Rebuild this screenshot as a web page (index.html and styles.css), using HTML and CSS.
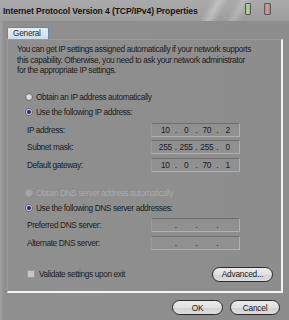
FILE: index.html
```
<!DOCTYPE html>
<html>
<head>
<meta charset="utf-8">
<link rel="stylesheet" href="styles.css">
</head>
<body>
<div class="win">
  <div class="titlebar">
    <span class="title">Internet Protocol Version 4 (TCP/IPv4) Properties</span>
    <span class="cap cap-green"></span>
    <span class="cap cap-red"></span>
  </div>
  <div class="client">
    <div class="tabs"><span class="tab">General</span></div>
    <div class="panel">
      <p class="intro">You can get IP settings assigned automatically if your network supports<br>this capability. Otherwise, you need to ask your network administrator<br>for the appropriate IP settings.</p>
      <div class="opt opt-first"><span class="radio"></span><span>Obtain an IP address automatically</span></div>
      <div class="opt"><span class="radio on"></span><span>Use the following IP address:</span></div>
      <div class="field-row fr-1"><span class="lbl">IP address:</span><span class="ip"><i>10</i><b>.</b><i>0</i><b>.</b><i>70</i><b>.</b><i>2</i></span></div>
      <div class="field-row"><span class="lbl">Subnet mask:</span><span class="ip"><i>255</i><b>.</b><i>255</i><b>.</b><i>255</i><b>.</b><i>0</i></span></div>
      <div class="field-row"><span class="lbl">Default gateway:</span><span class="ip"><i>10</i><b>.</b><i>0</i><b>.</b><i>70</i><b>.</b><i>1</i></span></div>
      <div class="opt opt-dns disabled"><span class="radio dim"></span><span>Obtain DNS server address automatically</span></div>
      <div class="opt"><span class="radio on"></span><span>Use the following DNS server addresses:</span></div>
      <div class="field-row fr-dns"><span class="lbl">Preferred DNS server:</span><span class="ip"><i></i><b>.</b><i></i><b>.</b><i></i><b>.</b><i></i></span></div>
      <div class="field-row"><span class="lbl">Alternate DNS server:</span><span class="ip"><i></i><b>.</b><i></i><b>.</b><i></i><b>.</b><i></i></span></div>
      <div class="validate-row">
        <span class="chk"></span><span class="vtext">Validate settings upon exit</span>
        <span class="btn btn-adv">Advanced...</span>
      </div>
    </div>
    <div class="buttons">
      <span class="btn btn-ok">OK</span>
      <span class="btn btn-cancel">Cancel</span>
    </div>
  </div>
</div>
</body>
</html>
```
FILE: styles.css
```
html, body {
  margin: 0;
  padding: 0;
}
body {
  width: 289px;
  height: 320px;
  overflow: hidden;
  background: #8d8d8d;
  font-family: "Liberation Sans", Arial, sans-serif;
  font-size: 8.3px;
  letter-spacing: -0.38px;
  color: #1c1c1c;
}
.win {
  width: 289px;
  height: 320px;
  display: flex;
  flex-direction: column;
  background: linear-gradient(90deg, #a2a2a2 0, #8f8f8f 4px, #8d8d8d 100%);
}
.titlebar {
  height: 21px;
  display: flex;
  align-items: center;
  padding-left: 3px;
  background:
    linear-gradient(120deg, transparent 0 70%, rgba(255,255,255,0.3) 73%, transparent 76%, transparent 79%, rgba(255,255,255,0.2) 81%, transparent 84%),
    linear-gradient(180deg, #aaaaaa 0%, #a3a3a3 60%, #9c9c9c 100%);
}
.title {
  font-weight: bold;
  font-size: 8.6px;
  color: #151515;
  letter-spacing: -0.1px;
  margin-top: 1px;
}
.cap {
  height: 12px;
  box-sizing: border-box;
  border-radius: 1px;
  border: 1px solid #5a5a5a;
  margin-top: 3px;
  align-self: flex-start;
}
.cap-green {
  width: 6px;
  margin-left: auto;
  background: linear-gradient(90deg, #9dbb8a, #b8d4a3, #93b07d);
}
.cap-red {
  width: 7px;
  margin-left: 13px;
  margin-right: 18px;
  background: linear-gradient(90deg, #b78585, #cfa0a0, #aa7676);
}
.client {
  flex: 1;
  display: flex;
  flex-direction: column;
  padding: 0 6px 0 7px;
}
.tabs {
  height: 18px;
  display: flex;
  align-items: flex-end;
}
.tab {
  width: 42px;
  height: 12px;
  box-sizing: border-box;
  border: 1px solid #6f87a0;
  border-bottom: none;
  border-radius: 2px 2px 0 0;
  background: linear-gradient(180deg, #e6eef4 0%, #cfdde8 100%);
  color: #202a36;
  padding-left: 5px;
  line-height: 11px;
  font-size: 8.2px;
  letter-spacing: -0.2px;
}
.panel {
  height: 254px;
  box-sizing: border-box;
  border-left: 1px solid #9a9a9a;
  border-top: 1px solid #9a9a9a;
  border-right: 2px solid #f3f3f3;
  border-bottom: 2px solid #f3f3f3;
  padding-left: 9px;
  display: flex;
  flex-direction: column;
}
.intro {
  margin: 4px 0 0 0;
  line-height: 10.6px;
  white-space: nowrap;
}
.opt {
  height: 12px;
  display: flex;
  align-items: center;
  gap: 3px;
  margin-left: 8px;
  margin-top: 3px;
}
.opt-first { margin-top: 15px; }
.opt-dns { margin-top: 15px; }
.disabled { color: #a9a9a9; }
.radio {
  width: 8px;
  height: 8px;
  box-sizing: border-box;
  border-radius: 50%;
  border: 1px solid #6e6e6e;
  background: radial-gradient(circle, #e4e4e4 0, #c4c4c4 100%);
  display: flex;
  align-items: center;
  justify-content: center;
}
.radio.on::after {
  content: "";
  width: 4px;
  height: 4px;
  border-radius: 50%;
  background: #1c2a6e;
}
.radio.dim {
  border-color: #9a9a9a;
  background: #a6a6a6;
}
.field-row {
  height: 14px;
  display: flex;
  align-items: center;
  margin-left: 10px;
  margin-top: 3.6px;
}
.fr-1 { margin-top: 5px; }
.fr-dns { margin-top: 4px; }
.lbl {
  width: 124px;
}
.ip {
  width: 89px;
  height: 14px;
  box-sizing: border-box;
  border: 1px solid #b0b0b0;
  border-top-color: #6f6f6f;
  border-left-color: #9a9a9a;
  background: #909090;
  display: flex;
  align-items: center;
  padding: 0 4px 0 6px;
  letter-spacing: -0.2px;
}
.ip i {
  font-style: normal;
  flex: 1;
  text-align: center;
}
.ip b {
  font-weight: normal;
  width: 6px;
  text-align: center;
}
.validate-row {
  display: flex;
  align-items: center;
  height: 15px;
  margin-top: 17px;
  margin-left: 10px;
}
.chk {
  width: 8px;
  height: 8px;
  box-sizing: border-box;
  border: 1px solid #9a9a9a;
  background: #c6c6c6;
  margin-right: 4px;
}
.btn {
  height: 15px;
  box-sizing: border-box;
  border: 1px solid #2a2a2a;
  border-radius: 8px;
  background: linear-gradient(180deg, #ececec 0%, #e0e0e0 50%, #d2d2d2 51%, #dcdcdc 100%);
  display: flex;
  align-items: center;
  justify-content: center;
  color: #1a1a1a;
  letter-spacing: -0.2px;
}
.btn-adv {
  margin-left: auto;
  margin-right: 8px;
  width: 61px;
}
.buttons {
  display: flex;
  justify-content: flex-end;
  gap: 7px;
  margin-top: 7px;
  margin-right: 3px;
}
.btn-ok { width: 51px; }
.btn-cancel { width: 50px; }
```
